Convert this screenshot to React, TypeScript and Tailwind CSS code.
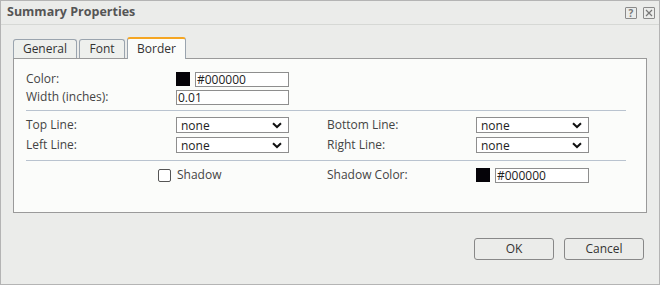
import React from "react";

const Chevron = () => (
  <svg width="10" height="7" viewBox="0 0 10 7" className="absolute right-[6px] top-[4px]">
    <path d="M1 1.2 L5 5 L9 1.2" stroke="#111" strokeWidth="2" fill="none" />
  </svg>
);

const Select = ({ className = "" }: { className?: string }) => (
  <div className={`relative h-[16px] w-[113px] border border-[#8e8e8e] bg-white pl-[4px] text-[12px] leading-[15px] text-[#222] ${className}`}>
    none
    <Chevron />
  </div>
);

const ColorField = () => (
  <div className="flex items-center">
    <div className="h-[14px] w-[14px] bg-[#050308]" />
    <div className="ml-[5px] h-[15px] w-[94px] border border-[#8e8e8e] bg-white pl-[1px] text-[12px] leading-[13px] text-[#222]">
      #000000
    </div>
  </div>
);

export default function App() {
  return (
    <div
      className="relative h-[285px] w-[660px] border border-[#b4b4b4] bg-[#ebecea] text-[#333]"
      style={{ fontFamily: '"Open Sans", "Liberation Sans", sans-serif' }}
    >
      <div className="flex h-[24px] items-center justify-between border-b border-[#d6d8d5] pl-[6px] pr-[4px]">
        <div className="text-[12.5px] font-bold text-[#555]">Summary Properties</div>
        <div className="flex gap-[6px]">
          <div className="flex h-[12px] w-[12px] items-center justify-center rounded-[1px] border border-[#8a8a8a] text-[10px] font-bold leading-none text-[#777]">?</div>
          <div className="flex h-[12px] w-[12px] items-center justify-center rounded-[1px] border border-[#8a8a8a]">
            <svg width="8" height="8" viewBox="0 0 8 8">
              <path d="M1 1 L7 7 M7 1 L1 7" stroke="#777" strokeWidth="1.2" />
            </svg>
          </div>
        </div>
      </div>

      <div className="ml-[12px] mr-[12px] mt-[12px]">
        <div className="flex items-end gap-[2px]">
          <div className="flex h-[19px] w-[64px] items-center justify-center rounded-t-[3px] border border-b-0 border-[#9aa4ae] bg-[#eef0ed] text-[12px] text-[#333]">General</div>
          <div className="flex h-[19px] w-[46px] items-center justify-center rounded-t-[3px] border border-b-0 border-[#9aa4ae] bg-[#eef0ed] text-[12px] text-[#333]">Font</div>
          <div className="relative z-10 -mb-px flex h-[22px] w-[59px] items-center justify-center rounded-t-[3px] border border-b-0 border-[#9aa4ae] border-t-2 border-t-[#f5a623] bg-[#fbfcfa] text-[12px] text-[#333]">Border</div>
        </div>
        <div className="h-[155px] w-[634px] border border-[#9a9a9a] bg-[#fbfcfa] px-[12px] pt-[12px] text-[12px] text-[#444]">
          <div className="flex h-[16px] items-center">
            <div className="w-[150px]">Color:</div>
            <ColorField />
          </div>
          <div className="mt-[2px] flex h-[16px] items-center">
            <div className="w-[150px]">Width (inches):</div>
            <div className="h-[15px] w-[113px] border border-[#8e8e8e] bg-white pl-[1px] leading-[13px] text-[#222]">0.01</div>
          </div>
          <div className="mr-[8px] mt-[5px] border-t border-[#b9c3cf]" />
          <div className="mt-[6px] flex h-[16px] items-center">
            <div className="w-[150px]">Top Line:</div>
            <Select />
            <div className="ml-[38px] w-[149px]">Bottom Line:</div>
            <Select />
          </div>
          <div className="mt-[4px] flex h-[16px] items-center">
            <div className="w-[150px]">Left Line:</div>
            <Select />
            <div className="ml-[38px] w-[149px]">Right Line:</div>
            <Select />
          </div>
          <div className="mr-[8px] mt-[7px] border-t border-[#b9c3cf]" />
          <div className="mt-[6px] flex h-[16px] items-center">
            <div className="w-[132px]" />
            <div className="h-[13px] w-[13px] rounded-[2px] border border-[#555] bg-white" />
            <div className="ml-[6px] w-[150px]">Shadow</div>
            <div className="w-[149px]">Shadow Color:</div>
            <ColorField />
          </div>
        </div>
      </div>

      <div className="mr-[15px] mt-[25px] flex justify-end gap-[10px]">
        <div className="flex h-[22px] w-[80px] items-center justify-center rounded-[3px] border border-[#888] bg-[#ebecea] text-[12px] text-[#333]">OK</div>
        <div className="flex h-[22px] w-[80px] items-center justify-center rounded-[3px] border border-[#888] bg-[#ebecea] text-[12px] text-[#333]">Cancel</div>
      </div>
    </div>
  );
}
